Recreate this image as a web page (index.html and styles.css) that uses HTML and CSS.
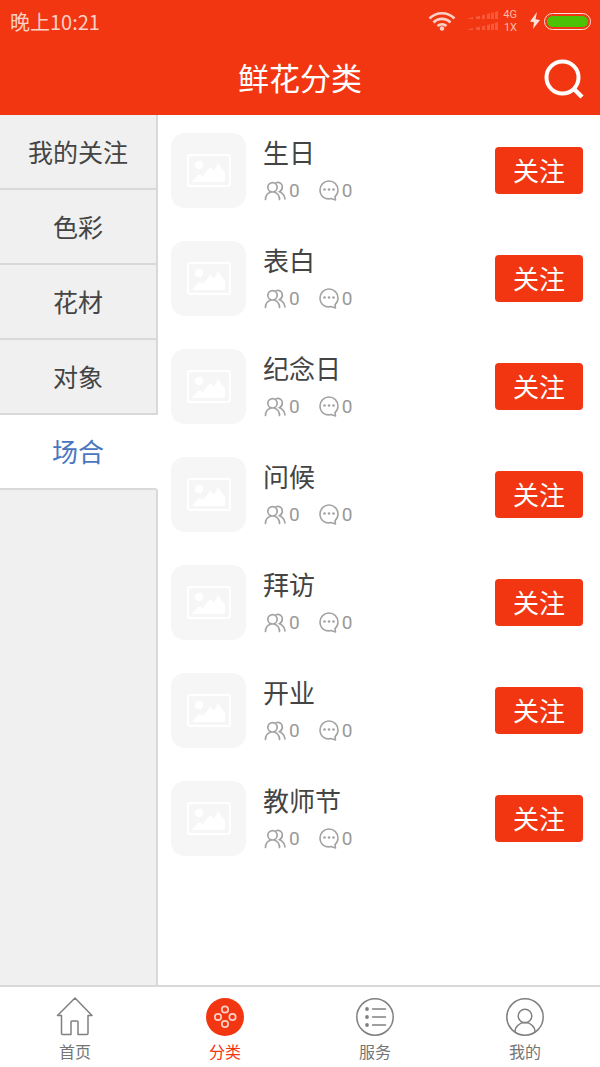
FILE: index.html
```html
<!DOCTYPE html>
<html lang="zh-CN">
<head>
<meta charset="utf-8">
<meta name="viewport" content="width=device-width, initial-scale=1">
<title>鲜花分类</title>
<link rel="stylesheet" href="styles.css">
</head>
<body>
<svg class="symbols" aria-hidden="true">
  <symbol id="photo" viewBox="0 0 44 33">
    <rect x="1" y="1" width="42" height="31" rx="2" fill="none" stroke="#fff" stroke-width="2"/>
    <circle cx="12" cy="11" r="4" fill="#fff"/>
    <path d="M5 28l7-8 4 2 7-9 4 4 4-8 7 10v9z" fill="#fff"/>
  </symbol>
  <symbol id="people" viewBox="0 0 22 20">
    <g fill="none" stroke="#a3a3a3" stroke-width="1.700" stroke-linecap="round">
      <circle cx="8.500" cy="6.300" r="4.700"/>
      <path d="M1.500 18.500c0-4 2-6.500 5.500-7.500M10 11c3.500 1 5.500 3.500 5.500 7.500M12 1.700c3.500-1.200 6.300 1 6.300 4.300 0 2-1 3.700-2.800 4.700 3.300 1.300 5 3.800 5.500 7.300"/>
    </g>
  </symbol>
  <symbol id="comment" viewBox="0 0 20 21">
    <path d="M12 18.500c-6 1.500-11-2.500-11-8.500 0-5 4-9 9-9s9 4 9 9c0 2.800-1 5-3 6.700l.5 3.300z" fill="none" stroke="#a3a3a3" stroke-width="1.600" stroke-linejoin="round"/>
    <g fill="#a3a3a3"><circle cx="5.500" cy="9.500" r="1.300"/><circle cx="10" cy="9.500" r="1.300"/><circle cx="14.500" cy="9.500" r="1.300"/></g>
  </symbol>
</svg>
<div class="app">
  <header class="header">
    <div class="status">
      <time class="clock">晚上10:21</time>
      <svg class="wifi" viewBox="0 0 28 20" aria-label="Wi-Fi">
        <g fill="none" stroke="#fbd0c6" stroke-width="2.700">
          <path d="M1.500 7.500a17.500 17.500 0 0 1 25 0M5.500 11.500a12 12 0 0 1 17 0M9.500 15a7 7 0 0 1 9 0"/>
        </g>
        <circle cx="14" cy="17.500" r="2.200" fill="#fbd0c6"/>
      </svg>
      <svg class="signal" viewBox="0 0 31 20" fill="#f65a3a" aria-label="信号">
        <path d="M0 8l6-2v2zM9 5.500l4-.8V8H9zM15 4.200l3-.7V8h-3zM20 3l3-.8V8h-3zM24 2l3-.5V8h-3zM28 1l3-1v8h-3z"/>
        <path d="M0 19l6-2v2zM9 16.500l4-.8V19H9zM15 15.200l3-.7V19h-3zM20 14l3-.8V19h-3zM24 13l3-.5V19h-3zM28 12l3-1v8h-3z"/>
      </svg>
      <span class="network"><span>4G</span><span>1X</span></span>
      <svg class="bolt" viewBox="0 0 10 18" aria-hidden="true"><path d="M7 0L0 9.500l4 .8L3 17l7-9-4.500-.7z" fill="#fde0da"/></svg>
      <span class="battery"><span class="charge"></span></span>
    </div>
    <div class="titlebar">
      <h1 class="title">鲜花分类</h1>
      <button class="search" type="button" aria-label="搜索">
        <svg viewBox="0 0 40 40"><circle cx="18.500" cy="18.500" r="16" fill="none" stroke="#fff" stroke-width="4"/><path d="M29.500 29.500l8.500 8.500" stroke="#fff" stroke-width="4.500"/></svg>
      </button>
    </div>
  </header>
  <div class="body">
    <nav class="side" aria-label="分类">
      <button class="cat" type="button">我的关注</button>
      <button class="cat" type="button">色彩</button>
      <button class="cat" type="button">花材</button>
      <button class="cat" type="button">对象</button>
      <button class="cat current" type="button">场合</button>
      <div class="rest"></div>
    </nav>
    <main class="main">
      <ul class="list">
        <li class="row"><span class="thumb"><svg><use href="#photo"/></svg></span><div class="info"><h2 class="name">生日</h2><p class="stats"><svg class="people"><use href="#people"/></svg><span class="num">0</span><svg class="comment"><use href="#comment"/></svg><span class="num">0</span></p></div><button class="follow" type="button">关注</button></li>
        <li class="row"><span class="thumb"><svg><use href="#photo"/></svg></span><div class="info"><h2 class="name">表白</h2><p class="stats"><svg class="people"><use href="#people"/></svg><span class="num">0</span><svg class="comment"><use href="#comment"/></svg><span class="num">0</span></p></div><button class="follow" type="button">关注</button></li>
        <li class="row"><span class="thumb"><svg><use href="#photo"/></svg></span><div class="info"><h2 class="name">纪念日</h2><p class="stats"><svg class="people"><use href="#people"/></svg><span class="num">0</span><svg class="comment"><use href="#comment"/></svg><span class="num">0</span></p></div><button class="follow" type="button">关注</button></li>
        <li class="row"><span class="thumb"><svg><use href="#photo"/></svg></span><div class="info"><h2 class="name">问候</h2><p class="stats"><svg class="people"><use href="#people"/></svg><span class="num">0</span><svg class="comment"><use href="#comment"/></svg><span class="num">0</span></p></div><button class="follow" type="button">关注</button></li>
        <li class="row"><span class="thumb"><svg><use href="#photo"/></svg></span><div class="info"><h2 class="name">拜访</h2><p class="stats"><svg class="people"><use href="#people"/></svg><span class="num">0</span><svg class="comment"><use href="#comment"/></svg><span class="num">0</span></p></div><button class="follow" type="button">关注</button></li>
        <li class="row"><span class="thumb"><svg><use href="#photo"/></svg></span><div class="info"><h2 class="name">开业</h2><p class="stats"><svg class="people"><use href="#people"/></svg><span class="num">0</span><svg class="comment"><use href="#comment"/></svg><span class="num">0</span></p></div><button class="follow" type="button">关注</button></li>
        <li class="row"><span class="thumb"><svg><use href="#photo"/></svg></span><div class="info"><h2 class="name">教师节</h2><p class="stats"><svg class="people"><use href="#people"/></svg><span class="num">0</span><svg class="comment"><use href="#comment"/></svg><span class="num">0</span></p></div><button class="follow" type="button">关注</button></li>
      </ul>
    </main>
  </div>
  <nav class="tabs" aria-label="主导航">
    <a class="tab" href="#home">
      <svg viewBox="0 0 38 40" fill="none" stroke="#808080" stroke-width="1.500" stroke-linejoin="round"><path d="M19 1L1.500 18.500h4V36.500q0 1 1 1h8.500V25q0-1 1-1h5q1 0 1 1v12.500h9q1 0 1-1v-18h4z"/></svg>
      <span>首页</span>
    </a>
    <a class="tab active" href="#category" aria-current="page">
      <svg viewBox="0 0 38 40"><circle cx="19" cy="20" r="19" fill="#f23611"/><g fill="none" stroke="#fbd0c6" stroke-width="1.700"><circle cx="19" cy="12.500" r="3.200"/><circle cx="12" cy="20" r="3.200"/><circle cx="26.500" cy="20" r="3.200"/><circle cx="19" cy="27" r="3.200"/></g></svg>
      <span>分类</span>
    </a>
    <a class="tab" href="#service">
      <svg viewBox="0 0 38 40" fill="none" stroke="#808080" stroke-width="1.500" stroke-linecap="round"><circle cx="19" cy="20" r="18.200"/><path d="M16.500 12h13M16.500 20h13M16.500 28h13"/><g fill="#808080" stroke="none"><circle cx="11" cy="12" r="1.900"/><circle cx="11" cy="20" r="1.900"/><circle cx="11" cy="28" r="1.900"/></g></svg>
      <span>服务</span>
    </a>
    <a class="tab" href="#me">
      <svg viewBox="0 0 38 40" fill="none" stroke="#808080" stroke-width="1.500"><circle cx="19" cy="20" r="18.200"/><circle cx="19" cy="19" r="6.800"/><path d="M9 35c0-5.500 4.500-9.500 10-9.500S29 29.500 29 35"/></svg>
      <span>我的</span>
    </a>
  </nav>
</div>
</body>
</html>
```

FILE: styles.css
```css
* { box-sizing: border-box; }
body {
  margin: 0;
  font-family: "Noto Sans CJK SC", "Noto Sans", sans-serif;
  color: #444;
  background: #fff;
}
button { font: inherit; border: 0; padding: 0; cursor: pointer; }
svg { display: block; flex: none; }
.symbols { position: absolute; width: 0; height: 0; }
.app { display: flex; flex-direction: column; min-height: 100vh; }

.header { background: #f23611; color: #fff; }
.status {
  display: flex;
  align-items: center;
  height: 42px;
  padding: 0 9px 0 10px;
}
.clock { flex: 1; padding-top: 2px; font-size: 20px; line-height: 28px; color: #fbd0c6; }
.wifi { width: 28px; height: 20px; }
.signal { width: 31px; height: 20px; margin-left: 11px; }
.network {
  display: flex;
  flex-direction: column;
  align-items: flex-end;
  width: 19px;
  font-family: Roboto, sans-serif;
  font-size: 11px;
  line-height: 13px;
  color: #fbb9aa;
}
.bolt { width: 10px; height: 18px; margin: 0 4px 0 13px; }
.battery {
  width: 47px;
  height: 17px;
  padding: 2px;
  border: 1px solid #fde0da;
  border-radius: 9px;
}
.charge { display: block; height: 100%; border-radius: 6px; background: #4cc206; }
.titlebar {
  display: grid;
  grid-template-columns: 40px 1fr 40px;
  align-items: center;
  height: 73px;
  padding: 0 16px;
}
.title {
  grid-column: 2;
  margin: 0;
  padding-bottom: 4px;
  font-size: 31px;
  line-height: 44px;
  font-weight: 400;
  text-align: center;
}
.search { width: 40px; height: 40px; background: none; }
.search svg { width: 40px; height: 40px; }

.body { flex: 1; display: flex; }
.side { display: flex; flex-direction: column; flex: none; width: 158px; }
.cat {
  height: 75px;
  padding-bottom: 2px;
  font-size: 25px;
  color: #444;
  background: #f0f0f0;
  border-right: 2px solid #d9d9d9;
  border-bottom: 2px solid #d9d9d9;
}
.cat.current { font-size: 26px; color: #4a76c0; background: #fff; border-right-color: #fff; }
.rest { flex: 1; background: #f0f0f0; border-right: 2px solid #d9d9d9; }

.main { flex: 1; padding: 18px 17px 18px 13px; }
.list { display: flex; flex-direction: column; gap: 33px; margin: 0; padding: 0; list-style: none; }
.row { display: flex; align-items: center; }
.thumb {
  display: flex;
  align-items: center;
  justify-content: center;
  width: 75px;
  height: 75px;
  border-radius: 14px;
  background: #f6f6f6;
}
.thumb svg { width: 44px; height: 33px; }
.info { flex: 1; padding-left: 17px; }
.name { margin: 0; font-size: 26px; line-height: 38px; font-weight: 400; }
.stats { display: flex; align-items: center; margin: 0; padding: 2px 0 0 1px; height: 37px; }
.people { width: 22px; height: 20px; }
.comment { width: 20px; height: 21px; margin-left: 19px; }
.num { padding-left: 3px; font-family: Roboto, sans-serif; font-size: 19px; line-height: 24px; color: #999; }
.follow {
  width: 88px;
  height: 47px;
  padding-bottom: 2px;
  border-radius: 4px;
  background: #f23611;
  color: #fff;
  font-size: 26px;
}

.tabs { display: flex; border-top: 2px solid #d9d9d9; background: #fff; }
.tab {
  flex: 1;
  display: flex;
  flex-direction: column;
  align-items: center;
  padding: 10px 0 2px;
  color: #757575;
  font-size: 16px;
  line-height: 28px;
  text-decoration: none;
}
.tab svg { width: 38px; height: 40px; }
.tab.active { color: #f23611; }
```
